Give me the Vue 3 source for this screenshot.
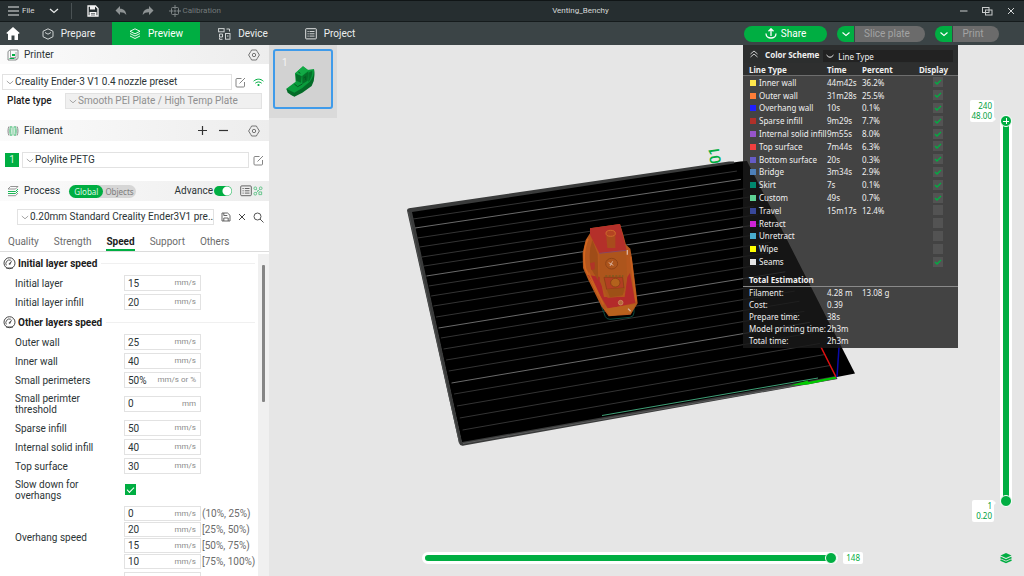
<script setup>
import { ref } from 'vue'

const firstLayer = [
  { label: 'Initial layer', value: '15', unit: 'mm/s' },
  { label: 'Initial layer infill', value: '20', unit: 'mm/s' },
]
const otherLayers = [
  { label: 'Outer wall', value: '25', unit: 'mm/s' },
  { label: 'Inner wall', value: '40', unit: 'mm/s' },
  { label: 'Small perimeters', value: '50%', unit: 'mm/s or %' },
  { label: 'Small perimter threshold', value: '0', unit: 'mm', tall: true },
  { label: 'Sparse infill', value: '50', unit: 'mm/s' },
  { label: 'Internal solid infill', value: '40', unit: 'mm/s' },
  { label: 'Top surface', value: '30', unit: 'mm/s' },
]
const groups = [
  { title: 'Initial layer speed', rows: firstLayer },
  { title: 'Other layers speed', rows: otherLayers },
]
const overhangs = [
  { value: '0', range: '(10%, 25%)' },
  { value: '20', range: '[25%, 50%)' },
  { value: '15', range: '[50%, 75%)' },
  { value: '10', range: '[75%, 100%)' },
]
const settingTabs = ['Quality', 'Strength', 'Speed', 'Support', 'Others']
const activeTab = ref('Speed')

const lineTypes = ref([
  { name: 'Inner wall', color: '#ffe64d', time: '44m42s', pct: '36.2%', on: true },
  { name: 'Outer wall', color: '#ff7d38', time: '31m28s', pct: '25.5%', on: true },
  { name: 'Overhang wall', color: '#1f1fff', time: '10s', pct: '0.1%', on: true },
  { name: 'Sparse infill', color: '#b03029', time: '9m29s', pct: '7.7%', on: true },
  { name: 'Internal solid infill', color: '#9654cc', time: '9m55s', pct: '8.0%', on: true },
  { name: 'Top surface', color: '#f04040', time: '7m44s', pct: '6.3%', on: true },
  { name: 'Bottom surface', color: '#665cc7', time: '20s', pct: '0.3%', on: true },
  { name: 'Bridge', color: '#4d80ba', time: '3m34s', pct: '2.9%', on: true },
  { name: 'Skirt', color: '#00876e', time: '7s', pct: '0.1%', on: true },
  { name: 'Custom', color: '#5ed194', time: '49s', pct: '0.7%', on: true },
  { name: 'Travel', color: '#38489b', time: '15m17s', pct: '12.4%', on: false },
  { name: 'Retract', color: '#cd22d6', time: '', pct: '', on: false },
  { name: 'Unretract', color: '#49adcf', time: '', pct: '', on: false },
  { name: 'Wipe', color: '#ffff00', time: '', pct: '', on: false },
  { name: 'Seams', color: '#e6e6e6', time: '', pct: '', on: true },
])
const totals = [
  ['Filament:', '4.28 m', '13.08 g'],
  ['Cost:', '0.39', ''],
  ['Prepare time:', '38s', ''],
  ['Model printing time:', '2h3m', ''],
  ['Total time:', '2h3m', ''],
]

const layerTop = ref(240)
const layerBottom = ref(1)
const step = ref(148)

// Grid lines of the build plate; every fifth one is brighter.
const gridYs = [219, 228, 238, 247, 257, 266, 276, 286, 296, 306, 317, 328, 338, 349, 360, 371, 383, 394, 406, 418, 430]
const gridLines = gridYs.map((y, i) => {
  const x = 413 + (y - 219) * 0.235
  const slope = -0.148 - (y - 219) * 0.00013
  const x2 = (734 + (y - slope * x - 165) * 0.481) / (1 - slope * 0.481)
  return { x, y, x2, y2: y + slope * (x2 - x), major: i % 5 === 1 }
})
</script>

<template>
  <div class="app">
    <header class="titlebar">
      <button class="bare file">
        <svg width="12" height="10" viewBox="0 0 12 10"><path d="M0 1h11M0 5h11M0 9h11" stroke="#e8eaea" stroke-width="1.2" /></svg>
        File
      </button>
      <button class="bare" aria-label="More">
        <svg width="10" height="6" viewBox="0 0 10 6"><path d="M1 1l4 3.5L9 1" fill="none" stroke="#e8eaea" stroke-width="1.3" /></svg>
      </button>
      <span class="divider"></span>
      <button class="bare save" aria-label="Save">
        <svg width="12" height="12" viewBox="0 0 12 12"><path d="M1 1h7.5L11 3.500V11H1z" fill="none" stroke="#f4f4f4" stroke-width="1.3" /><path d="M3 1h5v3.500H3zM2.500 7h7v4h-7z" fill="#f4f4f4" /><path d="M4 8.500h4M4 10h4" stroke="#262e30" stroke-width=".6" /></svg>
      </button>
      <button class="bare undo" aria-label="Undo">
        <svg width="12" height="10" viewBox="0 0 12 10"><path d="M5 0v2.800c4 0 6 2.500 6.300 6.200C9.800 6.900 8 6.200 5 6.200V9L.5 4.500z" fill="#8e9394" /></svg>
      </button>
      <button class="bare redo" aria-label="Redo">
        <svg width="12" height="10" viewBox="0 0 12 10"><path d="M7 0v2.800C3 2.800 1 5.300.7 9 2.200 6.900 4 6.200 7 6.200V9l4.500-4.500z" fill="#8e9394" /></svg>
      </button>
      <button class="bare calib">
        <svg width="12" height="12" viewBox="0 0 12 12"><g fill="none" stroke="#7d8384"><rect x="2.500" y="2.500" width="7" height="7" rx="1" /><path d="M6 0v4M6 8v4M0 6h4M8 6h4M4.500 6h3M6 4.500v3" /></g></svg>
        Calibration
      </button>
      <span class="title">Venting_Benchy</span>
      <div class="winbtns">
        <button class="bare" aria-label="Minimize"><svg width="8" height="8" viewBox="0 0 8 8"><path d="M0 4h7.500" stroke="#c9cccc" /></svg></button>
        <button class="bare" aria-label="Restore"><svg width="11" height="9" viewBox="0 0 11 9"><g fill="none" stroke="#c9cccc"><rect x=".5" y=".5" width="6.500" height="5" /><rect x="3.500" y="3" width="6.500" height="5" /></g></svg></button>
        <button class="bare" aria-label="Close"><svg width="8" height="8" viewBox="0 0 8 8"><path d="M1 1l6 6M7 1L1 7" stroke="#d5d8d8" /></svg></button>
      </div>
    </header>

    <nav class="tabbar">
      <button class="home" aria-label="Home">
        <svg width="14" height="13" viewBox="0 0 14 13"><path d="M7 0l6.700 6-1 1L12 6.500V13H8.500V8.500h-3V13H2V6.500L1.300 7l-1-1z" fill="#fff" /></svg>
      </button>
      <button class="tab prepare">
        <svg width="12" height="12" viewBox="0 0 12 12"><path d="M6 .8l5 2.500v5.400l-5 2.500-5-2.500V3.300zM3 4.500l3 1.700 3-1.700" fill="none" stroke="#cfd3d3" stroke-linejoin="round" /></svg>
        Prepare
      </button>
      <button class="tab active">
        <svg width="12" height="12" viewBox="0 0 12 12"><path d="M6 .8l5 2.500-5 2.500-5-2.500zM1 5.500l5 2.500 5-2.500M1 8l5 2.500L11 8" fill="none" stroke="#fff" stroke-width=".9" stroke-linejoin="round" /></svg>
        Preview
      </button>
      <button class="tab device">
        <svg width="13" height="12" viewBox="0 0 13 12"><g fill="none" stroke="#cfd3d3"><rect x=".6" y=".6" width="5.500" height="3.200" /><path d="M1.500 6h3v3h-3zM8.500 1h3v2.500M1.500 9.500v1.800h3" /><rect x="7.500" y="5.500" width="4.500" height="5.700" /><path d="M9 8h1.500" /></g></svg>
        Device
      </button>
      <button class="tab project">
        <svg width="12" height="12" viewBox="0 0 12 12"><rect x=".7" y=".7" width="10.600" height="10.200" rx=".6" fill="none" stroke="#e0e2e2" /><path d="M2.500 3.500h1.200M4.500 3.500h5M2.500 5.800h1.200M4.500 5.800h5M2.500 8.100h1.200M4.500 8.100h5" stroke="#e0e2e2" stroke-width=".9" /></svg>
        Project
      </button>
      <div class="actions">
        <button class="share">
          <svg width="12" height="11" viewBox="0 0 12 11"><path d="M6 8V1M3.500 3.300L6 .8l2.500 2.500M1 5.500c0 6 10 6 10 0" fill="none" stroke="#fff" stroke-width="1.300" /></svg>
          Share
        </button>
        <div class="split">
          <button class="drop" aria-label="Slice options"><svg width="10" height="6" viewBox="0 0 10 6"><path d="M1.500 1.500L5 4.500l3.500-3" fill="none" stroke="#fff" stroke-width="1.100" /></svg></button>
          <button class="grey slice">Slice plate</button>
        </div>
        <div class="split">
          <button class="drop" aria-label="Print options"><svg width="10" height="6" viewBox="0 0 10 6"><path d="M1.500 1.500L5 4.500l3.500-3" fill="none" stroke="#fff" stroke-width="1.100" /></svg></button>
          <button class="grey print">Print</button>
        </div>
      </div>
    </nav>

    <div class="body">
      <aside class="sidebar">
        <section class="printer">
          <h2 class="bar">
            <svg class="lead" width="12" height="12" viewBox="0 0 12 12"><path d="M1 2.500L3 1h8v8.500L9 11H1z" fill="none" stroke="#7b8080" stroke-width=".9" /><path d="M3.500 1.500v7h5.500v2M9 3v5" fill="none" stroke="#7b8080" stroke-width=".7" /><path d="M2.500 9h5v1h-5zM5 5h3v2H5z" fill="#00ae42" /></svg>
            Printer
            <button class="bare gear" aria-label="Printer settings"><svg width="12" height="12" viewBox="0 0 12 12"><path d="M3.600 1h4.800l.7 1.300L11.400 6l-2.300 3.700L8.400 11H3.600l-.7-1.300L.6 6l2.300-3.700z" fill="none" stroke="#666" stroke-width=".9" stroke-linejoin="round" /><circle cx="6" cy="6" r="1.700" fill="none" stroke="#666" stroke-width=".9" /></svg></button>
          </h2>
          <div class="line preset-row">
            <span class="pick grow">
              <svg class="chev" width="8" height="5" viewBox="0 0 8 5"><path d="M.8 1L4 3.800 7.200 1" fill="none" stroke="#a5a5a5" /></svg>
              <select aria-label="Printer preset"><option>Creality Ender-3 V1 0.4 nozzle preset</option></select>
            </span>
            <button class="bare" aria-label="Edit printer"><svg width="11" height="11" viewBox="0 0 11 11"><path d="M6.500 1.500H2A1 1 0 0 0 1 2.500V9a1 1 0 0 0 1 1h6.500a1 1 0 0 0 1-1V5M4.500 6.500L10 1" fill="none" stroke="#777" stroke-width=".9" /></svg></button>
            <button class="bare wifi" aria-label="Connection"><svg width="11" height="9" viewBox="0 0 11 9"><path d="M.6 3.200c3-2.700 6.800-2.700 9.800 0M2.300 5.200c2-1.700 4.400-1.700 6.400 0" fill="none" stroke="#00ae42" /><circle cx="5.500" cy="7" r="1.100" fill="#00ae42" /></svg></button>
          </div>
          <div class="line plate-row">
            <label for="plate">Plate type</label>
            <span class="pick grow off">
              <svg class="chev" width="8" height="5" viewBox="0 0 8 5"><path d="M.8 1L4 3.800 7.200 1" fill="none" stroke="#a5a5a5" /></svg>
              <select id="plate" disabled><option>Smooth PEI Plate / High Temp Plate</option></select>
            </span>
          </div>
        </section>

        <section class="filament">
          <h2 class="bar">
            <svg class="lead" width="12" height="12" viewBox="0 0 12 12"><path d="M2 1.500c-1.300 2-1.300 7 0 9M10 1.500c1.300 2 1.300 7 0 9" fill="none" stroke="#888" /><path d="M3.500 1.500c-1 2-1 7 0 9h1c-1-2-1-7 0-9zM7.500 1.500c1 2 1 7 0 9h1c1-2 1-7 0-9zM6 1.500v9" fill="none" stroke="#55bf80" stroke-width=".9" /></svg>
            Filament
            <span class="tools">
              <button class="bare" aria-label="Add filament"><svg width="9" height="9" viewBox="0 0 9 9"><path d="M0 4.500h9M4.500 0v9" stroke="#333" stroke-width="1.200" /></svg></button>
              <button class="bare" aria-label="Remove filament"><svg width="9" height="9" viewBox="0 0 9 9"><path d="M0 4.500h9" stroke="#333" stroke-width="1.200" /></svg></button>
              <button class="bare gear" aria-label="Filament settings"><svg width="12" height="12" viewBox="0 0 12 12"><path d="M3.600 1h4.800l.7 1.300L11.400 6l-2.300 3.700L8.400 11H3.600l-.7-1.300L.6 6l2.300-3.700z" fill="none" stroke="#666" stroke-width=".9" stroke-linejoin="round" /><circle cx="6" cy="6" r="1.700" fill="none" stroke="#666" stroke-width=".9" /></svg></button>
            </span>
          </h2>
          <div class="line fil-row">
            <button class="badge">1</button>
            <span class="pick grow">
              <svg class="chev" width="8" height="5" viewBox="0 0 8 5"><path d="M.8 1L4 3.800 7.200 1" fill="none" stroke="#a5a5a5" /></svg>
              <select aria-label="Filament preset"><option>Polylite PETG</option></select>
            </span>
            <button class="bare" aria-label="Edit filament"><svg width="11" height="11" viewBox="0 0 11 11"><path d="M6.500 1.500H2A1 1 0 0 0 1 2.500V9a1 1 0 0 0 1 1h6.500a1 1 0 0 0 1-1V5M4.500 6.500L10 1" fill="none" stroke="#777" stroke-width=".9" /></svg></button>
          </div>
        </section>

        <section class="process">
          <h2 class="bar">
            <svg class="lead" width="12" height="12" viewBox="0 0 12 12"><path d="M3.500 1.500h7.500L8.500 4H1z" fill="none" stroke="#888" stroke-width=".9" /><path d="M1 6.500h7.500L11 4M1 8.500h7.500L11 6" fill="none" stroke="#00ae42" stroke-width=".9" /><path d="M1 10.700h7.500L11 8" fill="none" stroke="#888" stroke-width=".9" /></svg>
            Process
            <span class="scope"><button class="on">Global</button><button>Objects</button></span>
            <label class="adv">Advance<input type="checkbox" checked /></label>
            <button class="bare" aria-label="Parameter list"><svg width="12" height="12" viewBox="0 0 12 12"><rect x=".7" y=".9" width="10.600" height="9.800" rx="1" fill="none" stroke="#555" stroke-width=".9" /><path d="M2.500 3.500h1.200M4.800 3.500h4.700M2.500 5.800h1.200M4.800 5.800h4.700M2.500 8.100h1.200M4.800 8.100h4.700" stroke="#555" stroke-width=".9" /></svg></button>
            <button class="bare compare" aria-label="Compare"><svg width="10" height="10" viewBox="0 0 11 11"><g fill="none" stroke="#4fbf7c" stroke-width=".9"><circle cx="2.500" cy="2.500" r="1.500" /><circle cx="8.500" cy="2.500" r="1.500" /><circle cx="2.500" cy="8.500" r="1.500" /><path d="M3.600 3.600L5 5M7.400 3.600L3.600 7.400M6.500 6.500h3v3h-3z" /></g></svg></button>
          </h2>
          <div class="line proc-row">
            <span class="pick grow">
              <svg class="chev" width="8" height="5" viewBox="0 0 8 5"><path d="M.8 1L4 3.800 7.200 1" fill="none" stroke="#a5a5a5" /></svg>
              <select aria-label="Process preset"><option>0.20mm Standard Creality Ender3V1 pre...</option></select>
            </span>
            <button class="bare" aria-label="Save preset"><svg width="10" height="10" viewBox="0 0 10 10"><path d="M1 1h5.500L9 3.300V9H1zM2.800 1v2.500h3.500M2.800 9V6h4.400v3" fill="none" stroke="#555" stroke-width=".9" /></svg></button>
            <button class="bare" aria-label="Discard"><svg width="8" height="8" viewBox="0 0 8 8"><path d="M1 1l6 6M7 1L1 7" stroke="#444" /></svg></button>
            <button class="bare" aria-label="Search"><svg width="11" height="11" viewBox="0 0 11 11"><circle cx="4.500" cy="4.500" r="3.500" fill="none" stroke="#555" /><path d="M7 7l3.500 3.500" stroke="#555" /></svg></button>
          </div>
        </section>

        <div class="settabs">
          <button v-for="t in settingTabs" :key="t" :class="{ sel: t === activeTab }" @click="activeTab = t">{{ t }}</button>
        </div>

        <div class="params">
          <div class="list">
            <section v-for="g in groups" :key="g.title" class="group">
              <h3>
                <svg width="13" height="13" viewBox="0 0 13 13"><circle cx="6.500" cy="6.200" r="5.500" fill="none" stroke="#444" stroke-width="1" /><path d="M3 11h7M3.300 8.500a3.700 3.700 0 0 1 4.500-5.300" fill="none" stroke="#444" stroke-width=".9" /><path d="M9.500 3L7 8 5.500 7z" fill="#444" /></svg>
                {{ g.title }}
              </h3>
              <div class="rows">
                <div v-for="r in g.rows" :key="r.label" class="row" :class="{ tall: r.tall }">
                  <label :for="r.label">{{ r.label }}</label>
                  <span class="field"><input :id="r.label" type="text" :value="r.value" /><i>{{ r.unit }}</i></span>
                </div>
                <template v-if="g.rows === otherLayers">
                  <div class="row tall">
                    <label for="slow">Slow down for overhangs</label>
                    <input id="slow" class="tick" type="checkbox" checked />
                  </div>
                  <div class="row">
                    <label for="over0">Overhang speed</label>
                    <div class="stack">
                      <div v-for="(o, i) in overhangs" :key="i" class="over">
                        <span class="field"><input :id="'over' + i" type="text" :value="o.value" :aria-label="'Overhang speed ' + o.range" /><i>mm/s</i></span>
                        <span>{{ o.range }}</span>
                      </div>
                    </div>
                  </div>
                  <div class="row">
                    <span></span>
                    <span class="field"><input type="text" aria-label="Bridge speed" /></span>
                  </div>
                </template>
              </div>
            </section>
          </div>
          <div class="scroll"><div class="thumb"></div></div>
        </div>
      </aside>

      <main class="view">
        <svg class="scene" viewBox="269 45 755 531" preserveAspectRatio="xMidYMid meet">
          <path d="M411 211L740 161.500 747 161 855 373.500 837 377 462 444z" fill="#000" />
          <path d="M407 210.500q0-2 2-2.300L729 161.500h5v2L412 212l50 230 374-66 1.500 3L464 445.500q-4 1-5-2.500z" fill="#3a3b3b" />
          <path d="M463 443.500L836 378.500" stroke="#5b5c5c" stroke-width="1" />
          <path d="M408.500 212l51 231" stroke="#4c4e4e" stroke-width="1" />
          <line v-for="l in gridLines" :key="l.y" :x1="l.x" :y1="l.y" :x2="l.x2" :y2="l.y2" :stroke="l.major ? '#6a6a6a' : '#333'" stroke-width="1" />
          <text transform="translate(721 163) rotate(-98)" class="plateno">01</text>
          <path d="M602 415.500L818 378" stroke="#3f9f76" stroke-width="1" />
          <path d="M836 376.500L808 382v-1.500L790 385.500l18-1L836 378.500z" fill="#0c0" />
          <path d="M821 347L836 377" stroke="#e01010" stroke-width="1.500" />
          <path d="M839.500 340L837 377" stroke="#0a0aa8" stroke-width="1.500" />
          <g transform="translate(560 140) scale(.3333)">
            <path d="M122 492l14 38q4 8 14 8l60-6q12-2 12-14v-14" fill="none" stroke="#0b4a3f" stroke-width="3" />
            <path d="M90 265l90-13 10 32 8 30 13 12 5 30 17 134-11 18-10 16-66 5-22-30-39-79-16-36-1-46 9-38 13-20z" fill="#b5561d" />
            <path d="M90 265l90-13 20 78-82 10-28-56z" fill="#b4302a" />
            <path d="M84 296q-18 40-8 90l40 80" fill="none" stroke="#d2661f" stroke-width="5" />
            <path d="M84 405l36 6 12 60 62 0 8-60 8-12 16 90-82 17z" fill="#b32a2a" />
            <path d="M118 340l80-9 3 75-6 50-14 14-38 4-14-30-10-20z" fill="#ad551c" />
            <path d="M118 340l80-9" stroke="#8a4560" stroke-width="3" />
            <path d="M97 300q-14 40-4 86l22 36-2-80z" fill="#9f4c18" />
            <path d="M90 370l14-4v22l-10 2z" fill="#b03428" />
            <path d="M138 280h28v44h-24z" fill="#a84c1c" />
            <ellipse cx="152" cy="280" rx="14" ry="9" fill="#b44422" stroke="#cf6a2c" stroke-width="3" />
            <ellipse cx="155" cy="371" rx="18" ry="16" fill="none" stroke="#8e4216" stroke-width="3" />
            <path d="M146 368l14 8M158 364l-8 14" stroke="#d8b09a" stroke-width="3" />
            <path d="M132 412h56l4 32-52 4z" fill="#b23e22" stroke="#823a14" stroke-width="2" />
            <ellipse cx="166" cy="428" rx="14" ry="13" fill="#b3621c" stroke="#7d3b12" stroke-width="2" />
            <path d="M140 448l54-4-6 22-38 6z" fill="#9d5016" />
            <path d="M133 506l95-14-16 28-62 8z" fill="#b8611d" />
            <path d="M202 330v14M204 506l8 8" stroke="#d9b3a0" stroke-width="4" />
            <circle cx="182" cy="488" r="7" fill="#b56a3a" stroke="#d69a70" stroke-width="2" />
            <path d="M136 408h54" stroke="#7c5a1e" stroke-width="5" stroke-dasharray="6 4" />
            <path d="M86 398l44 96M212 350l16 134" stroke="#c8601f" stroke-width="5" />
          </g>
        </svg>

        <div class="plates">
          <button class="plate" aria-label="Plate 1">
            <span>1</span>
            <svg width="30" height="34" viewBox="60 190 90 102">
              <path d="M64 264L92 243 90 218 114 197 127 208 147 205Q150 232 137 252L114 272 88 287 78 283Z" fill="#0a9c3c" />
              <path d="M64 264L88 276 112 262 134 243Q148 228 147 205 152 236 140 256L112 276 88 288 68 276Z" fill="#046b28" />
              <path d="M92 219L110 226 108 246 94 240ZM112 226L130 212 128 240 112 250Z" fill="#056f29" />
              <path d="M92 217L114 197 131 209 110 226Z" fill="#12a945" />
              <path d="M130 216L142 210Q142 230 130 244Z" fill="#04712a" />
              <path d="M88 250L98 258 112 250M100 214L106 218M116 232L122 228V238" fill="none" stroke="#045c22" stroke-width="3" />
            </svg>
          </button>
        </div>

        <div class="legend">
          <div class="lhead">
            <button class="bare" aria-label="Collapse"><svg width="8" height="8" viewBox="0 0 8 8"><path d="M.5 4L4 1l3.500 3M.5 7L4 4l3.500 3" fill="none" stroke="#ddd" stroke-width=".9" /></svg></button>
            <label for="scheme">Color Scheme</label>
            <span class="scheme">
              <svg class="chev" width="8" height="5" viewBox="0 0 8 5"><path d="M.5 1Q4 5.500 7.500 1" fill="none" stroke="#eee" /></svg>
              <select id="scheme"><option>Line Type</option></select>
            </span>
          </div>
          <table class="types">
            <thead><tr><th>Line Type</th><th>Time</th><th>Percent</th><th>Display</th></tr></thead>
            <tbody>
              <tr v-for="t in lineTypes" :key="t.name">
                <td><i class="sw" :style="{ background: t.color }"></i>{{ t.name }}</td>
                <td>{{ t.time }}</td>
                <td>{{ t.pct }}</td>
                <td><label class="vis"><input v-model="t.on" type="checkbox" :aria-label="t.name" /><svg v-if="t.on" width="10" height="10" viewBox="0 0 10 10"><path d="M2 5l2 2 4-4" fill="none" stroke="#00ae42" stroke-width="1.300" /></svg></label></td>
              </tr>
            </tbody>
          </table>
          <h4>Total Estimation</h4>
          <table class="totals">
            <tbody><tr v-for="r in totals" :key="r[0]"><td>{{ r[0] }}</td><td>{{ r[1] }}</td><td>{{ r[2] }}</td></tr></tbody>
          </table>
        </div>

        <div class="vslider">
          <input v-model.number="layerTop" class="upper" type="range" min="1" max="240" aria-label="Top layer" />
          <input v-model.number="layerBottom" class="lower" type="range" min="1" max="240" aria-label="Bottom layer" />
          <output class="tip t1">{{ layerTop }}<br />{{ (layerTop * 0.2).toFixed(2) }}</output>
          <output class="tip t2">{{ layerBottom }}<br />{{ (layerBottom * 0.2).toFixed(2) }}</output>
        </div>
        <div class="hslider">
          <input v-model.number="step" type="range" min="1" max="148" aria-label="Step" />
          <output>{{ step }}</output>
        </div>
        <button class="bare layers" aria-label="Layers"><svg width="12" height="12" viewBox="0 0 12 12"><path d="M6 1l5.500 2.500L6 6 .5 3.500z" fill="#00ae42" /><path d="M.5 5.500L6 8l5.500-2.500M.5 8L6 10.500 11.500 8" fill="none" stroke="#00ae42" stroke-width="1.500" /></svg></button>
      </main>
    </div>
  </div>
</template>

<style>
body {
  margin: 0;
}
</style>

<style scoped>
.app {
  height: 100vh;
  display: flex;
  flex-direction: column;
  overflow: hidden;
  background: #e6e6e6;
  color: #2b3436;
  font: 10px/12px Roboto, sans-serif;
}
.app * {
  box-sizing: border-box;
}
button,
input,
select {
  font: inherit;
  color: inherit;
  margin: 0;
  padding: 0;
  border: 0;
}
svg {
  display: block;
  flex: none;
}
h2,
h3,
h4 {
  margin: 0;
  font-size: inherit;
}
.bare {
  background: none;
  display: flex;
  align-items: center;
}

/* title bar */
.titlebar {
  height: 22px;
  flex: none;
  display: flex;
  align-items: center;
  background: #262e30;
  border-top: 1px solid #101516;
  border-bottom: 1px solid #151b1c;
  color: #d6d9d9;
  font: 8px/12px Roboto, sans-serif;
}
.file {
  gap: 2px;
  margin: 0 14px 0 8px;
}
.divider {
  width: 1px;
  height: 16px;
  margin: 0 15px 0 12px;
  background: #4a5254;
}
.undo {
  margin-left: 16px;
}
.redo {
  margin-left: 15px;
}
.calib {
  margin-left: 15px;
  gap: 2px;
  color: #747a7b;
}
.title {
  flex: 1;
  padding-right: 20px;
  text-align: center;
}
.winbtns {
  display: flex;
  align-items: center;
  gap: 14px;
  margin-right: 9px;
}

/* tab bar */
.tabbar {
  height: 23px;
  flex: none;
  display: flex;
  background: #3b4446;
  color: #eceeee;
}
.tabbar button {
  display: flex;
  align-items: center;
  justify-content: center;
}
.home {
  background: none;
  width: 25px;
}
.tab {
  background: none;
  gap: 7px;
}
.prepare {
  width: 87px;
}
.active {
  width: 88px;
  background: #00ae42;
  color: #fff;
}
.device {
  width: 86px;
}
.project {
  width: 88px;
}
.actions {
  display: flex;
  align-items: center;
  gap: 10px;
  margin-left: auto;
  padding-right: 25px;
}
.actions button {
  height: 16px;
}
.share {
  width: 83px;
  gap: 4px;
  border-radius: 8px;
  background: #00ae42;
  color: #fff;
}
.split {
  display: flex;
  border-radius: 8px;
  overflow: hidden;
}
.drop {
  width: 17px;
  background: #00ae42;
}
.grey {
  background: #6b6b6b;
  color: #a3a3a3;
  border-left: 1px solid #3b4446;
}
.slice {
  width: 71px;
  padding-right: 6px;
}
.print {
  width: 47px;
  padding-right: 6px;
}

.body {
  flex: 1;
  min-height: 0;
  display: flex;
}

/* sidebar */
.sidebar {
  width: 269px;
  flex: none;
  display: flex;
  flex-direction: column;
  background: #fff;
}
.bar {
  height: 20px;
  display: flex;
  align-items: center;
  padding: 0 9px 0 7px;
  background: linear-gradient(90deg, #fbfbfb, #ededed);
  font-weight: 400;
}
.printer .bar {
  height: 19px;
}
.lead {
  margin-right: 5px;
}
.gear {
  margin-left: auto;
}
.tools {
  display: flex;
  align-items: center;
  gap: 12px;
  margin-left: auto;
}
.tools .gear {
  margin-left: 8px;
}
.line {
  display: flex;
  align-items: center;
}
.pick {
  position: relative;
  display: flex;
  align-items: center;
  height: 16px;
  border: 1px solid #e2e2e2;
}
.grow {
  flex: 1;
  min-width: 0;
}
.chev {
  position: absolute;
  left: 3px;
  pointer-events: none;
}
.pick select,
.scheme select {
  appearance: none;
  width: 100%;
  height: 100%;
  padding-left: 12px;
  background: none;
  opacity: 1;
}
.off {
  background: #f0f0f0;
  color: #8f8f8f;
}
.preset-row {
  margin: 10px 5px 3px 2px;
  gap: 2px;
}
.preset-row .bare {
  margin-left: 1px;
}
.preset-row .wifi {
  margin-left: 5px;
}
.plate-row {
  margin: 0 7px 11px;
}
.plate-row label {
  width: 58px;
  font-weight: 500;
  color: #1c1c1c;
}
.filament .bar {
  height: 21px;
}
.fil-row {
  margin: 11px 5px 13px;
  gap: 3px;
}
.fil-row .bare {
  margin-left: 1px;
}
.badge {
  width: 14px;
  height: 14px;
  background: #00ae42;
  color: #d5f5df;
}
.scope {
  display: flex;
  margin-left: 9px;
  border-radius: 7px;
  background: #d6d6d6;
  color: #7d7d7d;
  font: 8px/13px "Noto Sans", sans-serif;
}
.scope button {
  height: 13px;
  padding: 0 2px;
  border-radius: 7px;
  background: none;
}
.scope .on {
  padding: 0 5px;
  background: #00ae42;
  color: #dcf7e5;
}
.adv {
  display: flex;
  align-items: center;
  gap: 1px;
  margin: 0 8px 0 auto;
}
.adv input {
  appearance: none;
  width: 18px;
  height: 10px;
  border-radius: 5px;
  background: radial-gradient(circle at 13px 5px, #fff 4px, #00ae42 5px);
}
.process .bar {
  padding-right: 6px;
}
.compare {
  margin-left: 1px;
}
.proc-row {
  margin: 8px 5px 0 17px;
  gap: 7px;
}
.proc-row .pick {
  height: 16px;
}
.settabs {
  flex: none;
  height: 27px;
  padding: 0 8px;
  display: flex;
  align-items: flex-end;
  gap: 15px;
  border-bottom: 1px solid #dcdcdc;
  color: #6b6b6b;
}
.settabs button {
  height: 18px;
  padding-top: 1px;
  background: none;
  border-bottom: 2px solid transparent;
}
.settabs .sel {
  border-color: #00ae42;
  color: #1c1c1c;
  font-weight: 700;
}
.params {
  flex: 1;
  min-height: 0;
  display: flex;
}
.list {
  flex: 1;
  overflow: hidden;
  padding-left: 3px;
}
.group + .group {
  margin-top: 1px;
}
h3 {
  display: flex;
  align-items: center;
  gap: 2px;
  height: 23px;
  color: #1c1c1c;
}
h3::after {
  content: "";
  flex: 1;
  height: 1px;
  margin: 0 3px 0 2px;
  background: #f0f0f0;
}
.rows {
  display: flex;
  flex-direction: column;
  gap: 3px;
  padding-left: 12px;
}
.row {
  display: grid;
  grid-template-columns: 109px 1fr;
  align-items: center;
}
.row > label {
  max-width: 84px;
  line-height: 11px;
}
.tall {
  height: 26px;
  padding-bottom: 1px;
}
.field {
  display: flex;
  align-items: center;
  width: 77px;
  height: 16px;
  padding: 0 4px 0 3px;
  border: 1px solid #e2e2e2;
}
.field input {
  flex: 1;
  min-width: 0;
  width: 0;
  height: 13px;
  background: none;
}
.field i {
  font: 8px/12px Roboto, sans-serif;
  color: #8a8a8a;
}
.tick {
  appearance: none;
  width: 11px;
  height: 11px;
  margin-left: 1px;
  display: grid;
  place-items: center;
  background: #00ae42;
}
.tick::after {
  content: "";
  width: 6px;
  height: 3px;
  margin-bottom: 2px;
  border: solid #fff;
  border-width: 0 0 1px 1px;
  transform: rotate(-45deg);
}
.stack {
  display: grid;
  gap: 1px;
}
.over {
  display: flex;
  align-items: center;
  gap: 1px;
  color: #6b6b6b;
}
.over .field {
  height: 15px;
  color: #2b3436;
}
.scroll {
  width: 11px;
  flex: none;
  margin-top: 2px;
  padding: 11px 4px 0;
  background: #f0f0f0;
}
.thumb {
  height: 137px;
  border-radius: 1px;
  background: #858585;
}

/* 3D view */
.view {
  position: relative;
  flex: 1;
  min-width: 0;
  background: #e6e6e6;
}
.scene {
  position: absolute;
  inset: 0;
  width: 100%;
  height: 100%;
}
.plateno {
  font: 500 15px Roboto, sans-serif;
  fill: #00ae42;
}
.plates {
  position: absolute;
  left: 0;
  top: 0;
  padding: 4px 4px 9px;
  background: #dadada;
}
.plate {
  position: relative;
  display: grid;
  place-items: center;
  width: 60px;
  height: 60px;
  border: 2px solid #3f9bea;
  border-radius: 3px;
  background: #d2d2d2;
}
.plate span {
  position: absolute;
  left: 7px;
  top: 6px;
  color: #f4f4f4;
}
.plate svg {
  margin: 4px 6px 0 0;
}

/* legend */
.legend {
  position: absolute;
  top: 0;
  right: 66px;
  width: 215px;
  padding-bottom: 2px;
  background: rgba(26, 26, 26, 0.8);
  color: #f0f0f0;
  font: 8px/11px "Noto Sans", sans-serif;
}
.lhead {
  display: flex;
  align-items: center;
  height: 18px;
  padding: 0 5px 0 7px;
  background: #2c2e2e;
}
.lhead label {
  margin: 0 4px 0 7px;
  font-weight: 700;
}
.scheme {
  position: relative;
  display: flex;
  align-items: center;
  flex: 1;
  height: 12px;
  margin-top: 4px;
  background: #222;
}
.scheme select {
  padding-left: 15px;
}
table {
  width: 100%;
  border-spacing: 0;
  table-layout: fixed;
}
td,
th {
  padding: 0;
  text-align: left;
  white-space: nowrap;
}
.types {
  height: 205px;
}
.types th {
  height: 13px;
  background: #2e2f2f;
  border-bottom: 1px solid #6e6e6e;
}
.types th:nth-child(1),
.totals td:nth-child(1) {
  width: 84px;
  padding-left: 6px;
}
.types td:nth-child(1) {
  padding-left: 7px;
}
.types th:nth-child(2),
.totals td:nth-child(2) {
  width: 35px;
}
.types th:nth-child(4) {
  width: 39px;
}
.types td:nth-child(4) {
  padding-left: 14px;
}
.sw {
  display: inline-block;
  width: 6px;
  height: 6px;
  margin-right: 3px;
}
.vis {
  display: block;
  position: relative;
  width: 10px;
  height: 10px;
  background: #535353;
}
.vis input {
  appearance: none;
  position: absolute;
  inset: 0;
}
h4 {
  height: 19px;
  padding: 6px 6px 0;
  border-bottom: 1px solid #8a8a8a;
}
.totals {
  height: 59px;
}

/* sliders */
input[type="range"] {
  appearance: none;
  background: none;
}
input[type="range"]::-webkit-slider-thumb {
  appearance: none;
  width: 12px;
  height: 12px;
  border: 1px solid #fff;
  border-radius: 50%;
  background: #00ae42;
}
.vslider {
  position: absolute;
  right: 12px;
  top: 70px;
  bottom: 69px;
  width: 12px;
  border: 3px solid #fff;
  border-radius: 6px;
  background: #00ae42;
}
.vslider input {
  position: absolute;
  left: -3px;
  top: -3px;
  width: 12px;
  height: calc(100% + 6px);
  writing-mode: vertical-lr;
  direction: rtl;
  pointer-events: none;
}
.vslider input::-webkit-slider-thumb {
  pointer-events: auto;
}
.vslider .upper::-webkit-slider-thumb {
  background: linear-gradient(#fff, #fff) center / 6px 1px no-repeat, linear-gradient(#fff, #fff) center / 1px 6px no-repeat, #00ae42;
}
.tip {
  position: absolute;
  right: 15px;
  padding: 1px 2px;
  border-radius: 2px;
  background: #fff;
  color: #00a03c;
  font: 8px/10px "Noto Sans", sans-serif;
  text-align: right;
}
.tip::after {
  content: "";
  position: absolute;
  left: 100%;
  border: 2px solid transparent;
  border-left-color: #fff;
}
.t1 {
  top: -18px;
}
.t1::after {
  bottom: 1px;
}
.t2 {
  bottom: -18px;
  padding-left: 4px;
}
.t2::after {
  top: 1px;
}
.hslider {
  position: absolute;
  left: 153px;
  right: 161px;
  bottom: 12px;
  display: flex;
  align-items: center;
  gap: 5px;
}
.hslider input {
  flex: 1;
  height: 12px;
  border: solid #fff;
  border-width: 3px 1px 3px 3px;
  border-radius: 6px;
  background: #00ae42;
}
.hslider output {
  padding: 1px 3px;
  border-radius: 2px;
  background: #fff;
  color: #00ae42;
  font: 8px/10px "Noto Sans", sans-serif;
}
.layers {
  position: absolute;
  right: 12px;
  bottom: 12px;
}
</style>
